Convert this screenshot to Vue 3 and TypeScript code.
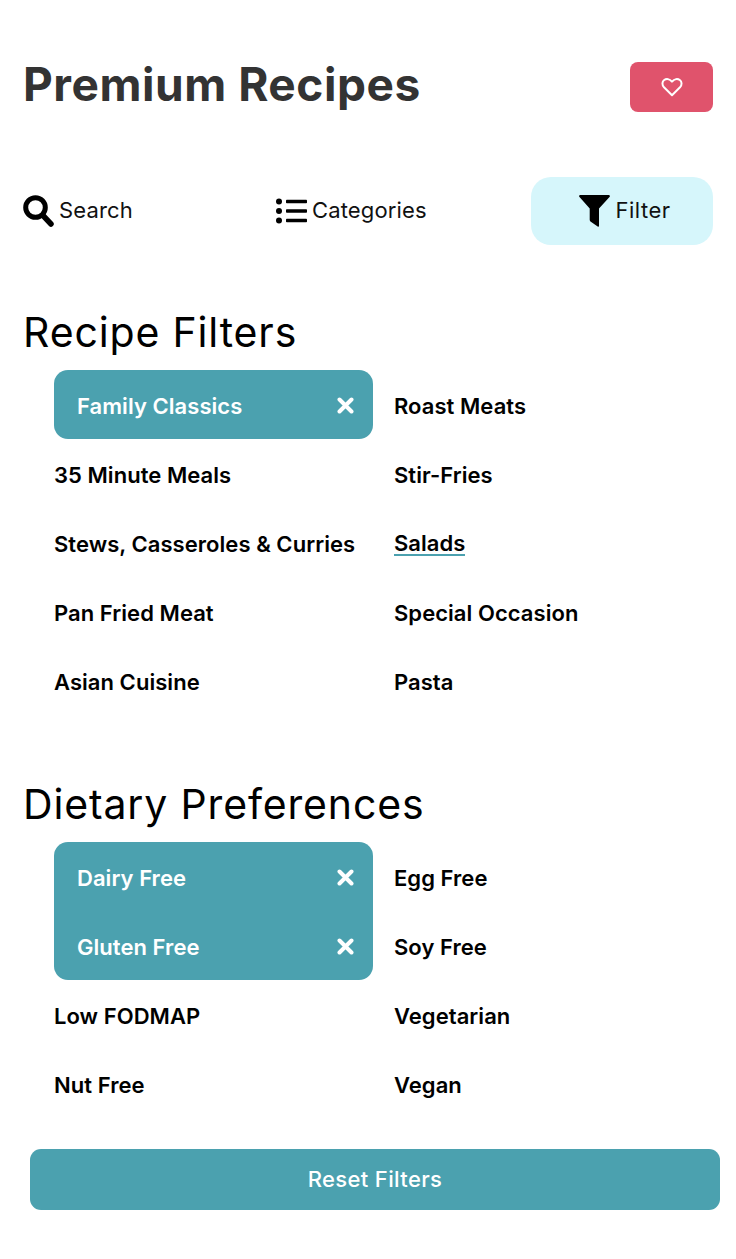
<script setup lang="ts">
interface Item { label: string; selected?: boolean; joinNext?: boolean; joinPrev?: boolean; underlined?: boolean }

const recipe: Item[] = [
  { label: 'Family Classics', selected: true },
  { label: 'Roast Meats' },
  { label: '35 Minute Meals' },
  { label: 'Stir-Fries' },
  { label: 'Stews, Casseroles & Curries' },
  { label: 'Salads', underlined: true },
  { label: 'Pan Fried Meat' },
  { label: 'Special Occasion' },
  { label: 'Asian Cuisine' },
  { label: 'Pasta' },
]
const dietary: Item[] = [
  { label: 'Dairy Free', selected: true, joinNext: true },
  { label: 'Egg Free' },
  { label: 'Gluten Free', selected: true, joinPrev: true },
  { label: 'Soy Free' },
  { label: 'Low FODMAP' },
  { label: 'Vegetarian' },
  { label: 'Nut Free' },
  { label: 'Vegan' },
]
const groups = [
  { title: 'Recipe Filters', items: recipe },
  { title: 'Dietary Preferences', items: dietary },
]
</script>

<template>
  <main class="page">
    <header class="top">
      <h1>Premium Recipes</h1>
      <button class="fav" aria-label="Favourites">
        <svg width="22" height="20" viewBox="0 0 22 20" fill="none" stroke="#fff" stroke-width="2" stroke-linejoin="round">
          <path d="M11 18.200 3 10.300C.8 8 1 4.600 3.200 3 5.300 1.500 8.500 1.700 11 4.600 13.500 1.700 16.700 1.500 18.800 3 21 4.600 21.200 8 19 10.300Z" />
        </svg>
      </button>
    </header>

    <nav class="tabs">
      <a class="tab tab-search">
        <svg width="31" height="32" viewBox="0 0 31 32">
          <circle cx="12.500" cy="12.500" r="9.800" fill="none" stroke="#000" stroke-width="5" />
          <path d="M20 20.500 28 29" stroke="#000" stroke-width="5.500" stroke-linecap="round" />
        </svg>
        <span>Search</span>
      </a>
      <a class="tab tab-cat">
        <svg width="32" height="26" viewBox="0 0 32 26">
          <circle cx="3" cy="3.500" r="3" />
          <circle cx="3" cy="13" r="3" />
          <circle cx="3" cy="22.500" r="3" />
          <rect x="10" y="1.700" width="21" height="3.600" rx=".8" />
          <rect x="10" y="11.200" width="21" height="3.600" rx=".8" />
          <rect x="10" y="20.700" width="21" height="3.600" rx=".8" />
        </svg>
        <span>Categories</span>
      </a>
      <a class="tab tab-filter">
        <svg width="31" height="32" viewBox="0 0 31 32">
          <path d="M1.500 0H29.500C30.700 0 31.300 1.200 30.500 2L20 13.500V30.800C20 31.800 19.300 32 18.700 31.500L11.800 26.800C11.100 26.300 10.700 25.700 10.700 24.800V13.500L.5 2C-.3 1.200.3 0 1.500 0Z" />
        </svg>
        <span>Filter</span>
      </a>
    </nav>

    <section v-for="g in groups" :key="g.title" class="group">
      <h2>{{ g.title }}</h2>
      <ul class="grid">
        <li
          v-for="it in g.items"
          :key="it.label"
          class="item"
          :class="{ selected: it.selected, 'join-next': it.joinNext, 'join-prev': it.joinPrev }"
        >
          <span :class="{ underlined: it.underlined }">{{ it.label }}</span>
          <svg v-if="it.selected" class="x" width="17" height="17" viewBox="0 0 17 17">
            <path d="M2.500 2.500 14.500 14.500M14.500 2.500 2.500 14.500" stroke="#fff" stroke-width="4" stroke-linecap="round" />
          </svg>
        </li>
      </ul>
    </section>

    <footer class="foot">
      <button class="reset">Reset Filters</button>
    </footer>
  </main>
</template>

<style scoped>
.page {
  width: 736px;
  height: 1259px;
  box-sizing: border-box;
  padding: 62px 23px 0;
  background: #fff;
  font-family: Inter, "Liberation Sans", sans-serif;
  color: #000;
  overflow: hidden;
}
.top {
  display: flex;
  justify-content: space-between;
  align-items: center;
  height: 50px;
}
h1 {
  margin: 0 0 6px;
  font-size: 46px;
  line-height: 50px;
  font-weight: 700;
  color: #333;
  letter-spacing: 0.55px;
}
.fav {
  width: 83px;
  height: 50px;
  border: 0;
  padding: 0;
  border-radius: 8px;
  background: #e0536c;
  display: flex;
  align-items: center;
  justify-content: center;
}
.tabs {
  margin-top: 65px;
  display: grid;
  grid-template-columns: 253px 255px 182px;
  height: 68px;
}
.tab {
  display: flex;
  align-items: center;
  gap: 5px;
  font-size: 22px;
  color: #111;
  letter-spacing: 0.15px;
}
.tab span { margin-bottom: 2px; }
.tab svg { flex: none; }
.tab-cat { gap: 4px; }
.tab-filter {
  justify-content: center;
  gap: 5px;
  padding-left: 6px;
  border-radius: 20px;
  background: #d6f6fb;
  letter-spacing: 0.5px;
}
.group { margin-top: 61px; }
.group + .group { margin-top: 63px; }
h2 {
  margin: 0 0 12px;
  font-size: 41px;
  line-height: 52px;
  font-weight: 400;
  letter-spacing: 0.85px;
}
.grid {
  list-style: none;
  margin: 0;
  padding: 0 0 0 31px;
  display: grid;
  grid-template-columns: 319px 319px;
  column-gap: 21px;
  grid-auto-rows: 69px;
}
.item {
  display: flex;
  align-items: center;
  justify-content: space-between;
  padding-top: 2px;
  box-sizing: border-box;
  font-size: 22px;
  font-weight: 600;
  letter-spacing: 0.05px;
  color: #000;
}
.selected {
  padding: 2px 19px 0 23px;
  background: #4ba1af;
  color: #fff;
  border-radius: 14px;
}
.join-next { border-bottom-left-radius: 0; border-bottom-right-radius: 0; }
.join-prev { border-top-left-radius: 0; border-top-right-radius: 0; }
.underlined {
  border-bottom: 2px solid #4ba1af;
  line-height: 21px;
  margin-top: 1px;
}
.foot {
  margin: 31px -7px 0 7px;
}
.reset {
  display: block;
  width: 100%;
  height: 61px;
  padding: 0 0 2px;
  border: 0;
  border-radius: 11px;
  background: #4ba1af;
  color: #fff;
  font: 500 22px Inter, "Liberation Sans", sans-serif;
  letter-spacing: 0.35px;
}
</style>
